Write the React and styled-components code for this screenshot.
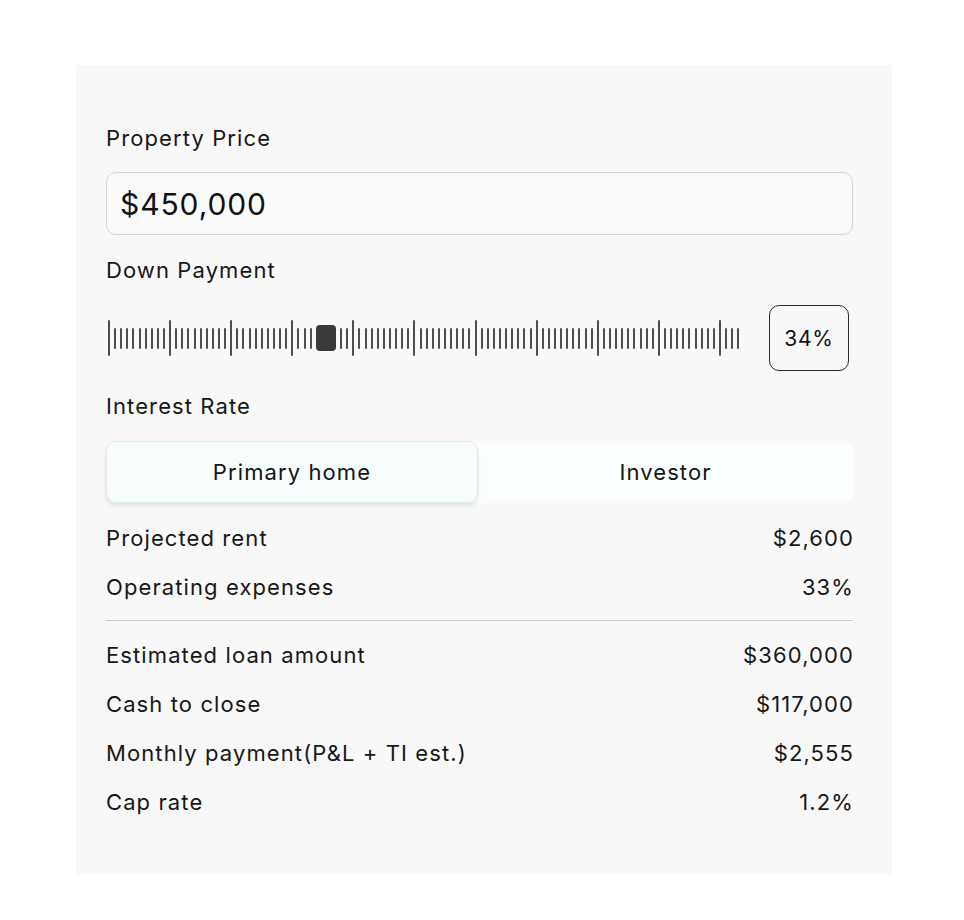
import React from "react";
import styled, { createGlobalStyle } from "styled-components";

const Global = createGlobalStyle`
  html, body { margin: 0; padding: 0; background: #ffffff; }
  body { font-family: Inter, "Noto Sans", sans-serif; color: #141414; }
  * { box-sizing: border-box; }
`;

const Panel = styled.div`
  margin: 65px 0 0 76px;
  width: 816px;
  background: #f8f8f8;
  padding: 60px 39px 59px 30px;
  display: flex;
  flex-direction: column;
  gap: 22px;
`;

const Label = styled.div`
  font-size: 22px;
  line-height: 26px;
  letter-spacing: 1.1px;
  color: #171717;
`;

const PriceInput = styled.div`
  margin-top: -1px;
  height: 63px;
  border: 1px solid #d2d2d2;
  border-radius: 10px;
  background: #f9f9f9;
  display: flex;
  align-items: center;
  padding: 0 13px;
  font-size: 30px;
  letter-spacing: 0.9px;
  color: #111;
`;

const SliderRow = styled.div`
  display: flex;
  align-items: center;
  height: 66px;
`;

const Track = styled.div`
  position: relative;
  margin-left: 2px;
  width: 632px;
  height: 40px;
  display: flex;
  align-items: center;
  justify-content: space-between;
`;

const Tick = styled.span`
  display: block;
  width: 2px;
  height: ${(p) => (p.$major ? 36 : 21)}px;
  background: #4e4e4e;
  border-radius: 1px;
`;

const Thumb = styled.span`
  position: absolute;
  top: 7px;
  width: 20px;
  height: 26px;
  background: #3a3a3a;
  border-radius: 4px;
  box-shadow: 0 0 0 1px #f8f8f8;
`;

const PercentBox = styled.div`
  margin-left: 29px;
  width: 80px;
  height: 66px;
  border: 1px solid #2a2a2a;
  border-radius: 10px;
  display: flex;
  align-items: center;
  justify-content: center;
  font-size: 21px;
  letter-spacing: 0.8px;
  color: #111;
`;

const Segmented = styled.div`
  display: grid;
  grid-template-columns: 372px 1fr;
  height: 62px;
  background: #fbfefe;
  border-radius: 10px;
`;

const Segment = styled.div`
  display: flex;
  align-items: center;
  justify-content: center;
  font-size: 22px;
  letter-spacing: 1.1px;
  color: #141414;
  border-radius: 10px;
  border: 1px solid ${(p) => (p.$active ? "#e2e6e6" : "transparent")};
  background: ${(p) => (p.$active ? "#f7fdfd" : "transparent")};
  box-shadow: ${(p) => (p.$active ? "0 3px 5px rgba(0,0,0,0.09)" : "none")};
`;

const Rows = styled.div`
  display: flex;
  flex-direction: column;
  gap: 23px;
`;

const Row = styled.div`
  display: flex;
  justify-content: space-between;
  font-size: 22px;
  line-height: 26px;
  letter-spacing: 1.1px;
  color: #171717;
`;

const Value = styled.span`
  margin-right: -1px;
`;

const Divider = styled.hr`
  margin: -2px 0 -1px;
  border: none;
  border-top: 1px solid #c9c9c9;
`;

const TICKS = 104;
const THUMB_LEFT = 208;

export default function App() {
  const ticks = Array.from({ length: TICKS }, (_, i) => i);
  return (
    <>
      <Global />
      <Panel>
        <Label>Property Price</Label>
        <PriceInput>$450,000</PriceInput>
        <Label>Down Payment</Label>
        <SliderRow>
          <Track>
            {ticks.map((i) => (
              <Tick key={i} $major={i % 10 === 0} />
            ))}
            <Thumb style={{ left: THUMB_LEFT }} />
          </Track>
          <PercentBox>34%</PercentBox>
        </SliderRow>
        <Label>Interest Rate</Label>
        <Segmented>
          <Segment $active>Primary home</Segment>
          <Segment>Investor</Segment>
        </Segmented>
        <Rows>
          <Row><span>Projected rent</span><Value>$2,600</Value></Row>
          <Row><span>Operating expenses</span><Value>33%</Value></Row>
        </Rows>
        <Divider />
        <Rows>
          <Row><span>Estimated loan amount</span><Value>$360,000</Value></Row>
          <Row><span>Cash to close</span><Value>$117,000</Value></Row>
          <Row><span>Monthly payment(P&amp;L + TI est.)</span><Value>$2,555</Value></Row>
          <Row><span>Cap rate</span><Value>1.2%</Value></Row>
        </Rows>
      </Panel>
    </>
  );
}
